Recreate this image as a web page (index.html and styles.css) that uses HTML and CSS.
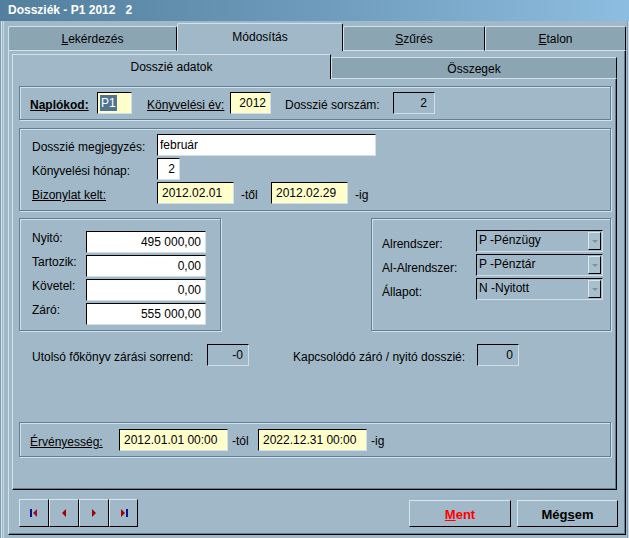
FILE: index.html
```html
<!DOCTYPE html>
<html lang="hu">
<head>
<meta charset="utf-8">
<title>Dossziék</title>
<link rel="stylesheet" href="styles.css">
</head>
<body>
<div class="window">
  <div class="titlebar">Dossziék - P1 2012   2</div>
  <div class="frame">
    <div class="tabs">
      <div class="tab t1"><span><u>L</u>ekérdezés</span></div>
      <div class="tab active t2"><span>Módosítás</span></div>
      <div class="tab t3"><span><u>S</u>zűrés</span></div>
      <div class="tab t4"><span><u>E</u>talon</span></div>
    </div>
    <div class="page">
      <div class="subtabs">
        <div class="subtab active s1">Dosszié adatok</div>
        <div class="subtab s2">Összegek</div>
      </div>
      <div class="subpage">
        <div class="group g1">
          <span class="lbl bold w-naplo"><u>Naplókod:</u></span>
          <div class="field yellow w34"><span class="sel">P1</span></div>
          <span class="lbl w-konyv"><u>Könyvelési év:</u></span>
          <div class="field yellow w40 right">2012</div>
          <span class="lbl w-sorsz">Dosszié sorszám:</span>
          <div class="field ro w42 right pr7">2</div>
        </div>

        <div class="group g2">
          <div class="row">
            <span class="lbl w125">Dosszié megjegyzés:</span>
            <div class="field w219 pl2">február</div>
          </div>
          <div class="row">
            <span class="lbl w125">Könyvelési hónap:</span>
            <div class="field w23 right">2</div>
          </div>
          <div class="row">
            <span class="lbl w125"><u>Bizonylat kelt:</u></span>
            <div class="field yellow w76">2012.02.01</div>
            <span class="lbl suffix w36">-től</span>
            <div class="field yellow w76">2012.02.29</div>
            <span class="lbl suffix">-ig</span>
          </div>
        </div>

        <div class="mid">
          <div class="group g3">
            <div class="arow"><span class="lbl top w54">Nyitó:</span><div class="field w120 right">495 000,00</div></div>
            <div class="arow"><span class="lbl top w54">Tartozik:</span><div class="field w120 right">0,00</div></div>
            <div class="arow"><span class="lbl top w54">Követel:</span><div class="field w120 right">0,00</div></div>
            <div class="arow"><span class="lbl top w54">Záró:</span><div class="field w120 right">555 000,00</div></div>
          </div>
          <div class="group g4">
            <div class="arow"><span class="lbl low w94">Alrendszer:</span><div class="select"><span class="stext">P -Pénzügy</span><span class="sbtn"><i class="tri"></i></span></div></div>
            <div class="arow"><span class="lbl low w94">Al-Alrendszer:</span><div class="select"><span class="stext">P -Pénztár</span><span class="sbtn"><i class="tri"></i></span></div></div>
            <div class="arow"><span class="lbl low w94">Állapot:</span><div class="select"><span class="stext">N -Nyitott</span><span class="sbtn"><i class="tri"></i></span></div></div>
          </div>
        </div>

        <div class="inforow">
          <span class="lbl w175">Utolsó főkönyv zárási sorrend:</span>
          <div class="field ro w42 right pr5">-0</div>
          <span class="lbl w184 ml44">Kapcsolódó záró / nyitó dosszié:</span>
          <div class="field ro w42 right pr5">0</div>
        </div>

        <div class="group g5">
          <span class="lbl w89"><u>Érvényesség:</u></span>
          <div class="field yellow w109">2012.01.01 00:00</div>
          <span class="lbl suffix2 w30">-tól</span>
          <div class="field yellow w109">2022.12.31 00:00</div>
          <span class="lbl suffix2">-ig</span>
        </div>
      </div>

      <div class="buttons">
        <div class="nav">
          <div class="btn nb"><svg width="10" height="10" viewBox="0 0 10 10"><rect x="1" y="1" width="2" height="8" fill="#10108c"/><path d="M8 1 L4 5 L8 9 Z" fill="#9c0c2c"/></svg></div>
          <div class="btn nb"><svg width="10" height="10" viewBox="0 0 10 10"><path d="M7 1 L3 5 L7 9 Z" fill="#a00000"/></svg></div>
          <div class="btn nb"><svg width="10" height="10" viewBox="0 0 10 10"><path d="M3 1 L7 5 L3 9 Z" fill="#a00000"/></svg></div>
          <div class="btn nb w29"><svg width="10" height="10" viewBox="0 0 10 10"><path d="M2 1 L6 5 L2 9 Z" fill="#a00000"/><rect x="7" y="1" width="2" height="8" fill="#10108c"/></svg></div>
        </div>
        <div class="actions">
          <div class="btn big ment"><u>M</u>ent</div>
          <div class="btn big megsem">Még<u>s</u>em</div>
        </div>
      </div>
    </div>
  </div>
</div>
</body>
</html>
```
FILE: styles.css
```css
html, body {
  margin: 0;
  padding: 0;
}
body {
  width: 629px;
  height: 538px;
  overflow: hidden;
  background: #a0b8c7;
  font-family: "Liberation Sans", Arial, sans-serif;
  font-size: 12px;
  color: #000;
}
.window {
  width: 629px;
  height: 538px;
  box-sizing: border-box;
  background: #a0b8c7;
  border-left: 1px solid #7f9fb4;
  box-shadow: inset 1px 0 0 #d0e0ea, inset 2px 0 0 #a0b8c7, inset 3px 0 0 #c8d8e2, inset -1px 0 0 #c8dce8, inset -2px 0 0 #7f9fb4;
}
.titlebar {
  height: 21px;
  box-sizing: border-box;
  padding: 3px 0 0 8px;
  background: linear-gradient(to right, #537f9e, #6e9bbb 50%, #8dbde0);
  color: #fff;
  font-weight: bold;
  font-size: 12px;
  white-space: pre;
  margin-left: -1px;
}
.frame {
  padding: 2px 2px 0 7px;
}
.tabs {
  display: flex;
  align-items: flex-end;
  height: 28px;
}
.tab {
  box-sizing: border-box;
  height: 25px;
  background: #8ca5b3;
  border-top: 1px solid #d2e2ec;
  border-left: 1px solid #d2e2ec;
  border-right: 1px solid #000;
  border-bottom: 1px solid #d2e2ec;
  border-radius: 2px 2px 0 0;
  display: flex;
  align-items: center;
  justify-content: center;
  padding-top: 1px;
}
.tab.active {
  height: 28px;
  background: #a0b8c7;
  border-bottom: none;
  padding-top: 0;
  padding-bottom: 1px;
}
.t1 { width: 169px; }
.t2 { width: 166px; }
.t3 { width: 142px; }
.t4 { width: 141px; }
.page {
  box-sizing: border-box;
  width: 618px;
  height: 484px;
  border-left: 1px solid #d2e2ec;
  border-right: 1px solid #000;
  border-bottom: 1px solid #000;
  box-shadow: inset -1px -1px 0 #5f7f94;
  padding-left: 3px;
}
.subtabs {
  display: flex;
  align-items: flex-end;
  height: 25px;
  padding-top: 3px;
}
.subtab {
  box-sizing: border-box;
  height: 22px;
  background: #8ca5b3;
  border-top: 1px solid #d2e2ec;
  border-left: 1px solid #d2e2ec;
  border-right: 1px solid #000;
  border-bottom: 1px solid #d2e2ec;
  display: flex;
  align-items: center;
  justify-content: center;
  padding-top: 1px;
}
.subtab.active {
  height: 25px;
  background: #a0b8c7;
  border-bottom: none;
  padding-top: 0;
}
.s1 { width: 319px; }
.s2 { width: 286px; }
.subpage {
  box-sizing: border-box;
  width: 605px;
  height: 411px;
  border-left: 1px solid #d2e2ec;
  border-right: 1px solid #000;
  border-bottom: 1px solid #000;
  box-shadow: inset -1px -1px 0 #5f7f94;
  padding: 7px 5px 0 6px;
  display: flex;
  flex-direction: column;
}
.group {
  box-sizing: border-box;
  border: 1px solid #5f7f94;
  box-shadow: inset 1px 1px 0 #d2e2ec, 1px 1px 0 #d2e2ec;
}
.g1 {
  height: 34px;
  display: flex;
  align-items: center;
  padding-left: 10px;
}
.g2 {
  margin-top: 8px;
  height: 83px;
  padding: 5px 0 0 12px;
  display: flex;
  flex-direction: column;
  gap: 2px;
}
.row {
  display: flex;
  align-items: center;
  height: 22px;
}
.mid {
  margin-top: 7px;
  display: flex;
  justify-content: space-between;
  height: 113px;
}
.g3 {
  width: 202px;
  padding: 12px 0 0 12px;
  display: flex;
  flex-direction: column;
  gap: 2px;
}
.g4 {
  width: 240px;
  padding: 11px 0 0 10px;
  display: flex;
  flex-direction: column;
  gap: 2px;
}
.arow {
  display: flex;
  height: 22px;
  align-items: center;
}
.inforow {
  margin-top: 13px;
  display: flex;
  align-items: center;
  height: 22px;
  padding-left: 13px;
}
.g5 {
  margin-top: 56px;
  height: 35px;
  display: flex;
  align-items: center;
  padding: 1px 0 0 10px;
}
.lbl {
  white-space: nowrap;
  padding-top: 4px;
  box-sizing: border-box;
}
.lbl.top { padding-top: 0; padding-bottom: 8px; }
.lbl.low { padding-top: 6px; }
.bold { font-weight: bold; }
.suffix { padding-left: 7px; }
.suffix2 { padding-left: 4px; padding-top: 2px; }
.w-naplo { width: 67px; }
.w-konyv { width: 83px; margin-left: 15px; }
.w-sorsz { width: 108px; margin-left: 14px; }
.w125 { width: 125px; }
.w54 { width: 54px; }
.w94 { width: 94px; }
.w175 { width: 175px; }
.w184 { width: 184px; }
.ml44 { margin-left: 44px; }
.w89 { width: 89px; }
.w36 { width: 37px; }
.w30 { width: 30px; }

.field {
  box-sizing: border-box;
  height: 22px;
  border-style: solid;
  border-width: 1px;
  border-color: #000 #d0dfe8 #d0dfe8 #000;
  background: #fff;
  padding: 0 4px;
  line-height: 20px;
  white-space: nowrap;
  overflow: hidden;
  flex: none;
}
.field.yellow { background: #ffffcc; }
.field.ro { background: transparent; border-color: #000 #d0dfe8 #d0dfe8 #000; }
.right { text-align: right; }
.pr7 { padding-right: 7px; }
.pr5 { padding-right: 5px; }
.pl2 { padding-left: 2px; }
.w34 { width: 35px; padding-left: 2px; }
.w40 { width: 41px; }
.w42 { width: 42px; }
.w219 { width: 219px; }
.w23 { width: 23px; }
.w76 { width: 77px; }
.w120 { width: 120px; }
.w109 { width: 109px; }
.sel {
  background: #4f7593;
  color: #fff;
  display: inline-block;
  line-height: 16px;
  padding: 0 1px;
}

.select {
  box-sizing: border-box;
  width: 127px;
  height: 22px;
  border-style: solid;
  border-width: 1px;
  border-color: #000 #d0dfe8 #d0dfe8 #000;
  display: flex;
  align-items: flex-start;
  justify-content: space-between;
  padding: 1px 1px 0 2px;
}
.stext { line-height: 16px; }
.sbtn {
  box-sizing: border-box;
  width: 13px;
  height: 18px;
  background: #a8bfcc;
  border-style: solid;
  border-width: 1px;
  border-color: #d8e6ee #000 #000 #d8e6ee;
  display: flex;
  align-items: center;
  justify-content: center;
}
.tri {
  width: 0;
  height: 0;
  border-left: 3px solid transparent;
  border-right: 3px solid transparent;
  border-top: 3px solid #8090a0;
}

.buttons {
  margin-top: 9px;
  display: flex;
  justify-content: space-between;
  padding: 0 7px 0 7px;
}
.nav { display: flex; }
.btn {
  box-sizing: border-box;
  border-style: solid;
  border-width: 1px;
  border-color: #d8e6ee #000 #000 #d8e6ee;
  display: flex;
  align-items: center;
  justify-content: center;
  background: #a0b8c7;
}
.nb { width: 30px; height: 28px; }
.nb.w29 { width: 29px; }
.actions { display: flex; gap: 6px; padding-top: 1px; }
.big {
  width: 102px;
  height: 27px;
  font-weight: bold;
  font-size: 13px;
  padding-top: 1px;
}
.megsem { width: 101px; }
.ment { color: #ff0000; }
```
